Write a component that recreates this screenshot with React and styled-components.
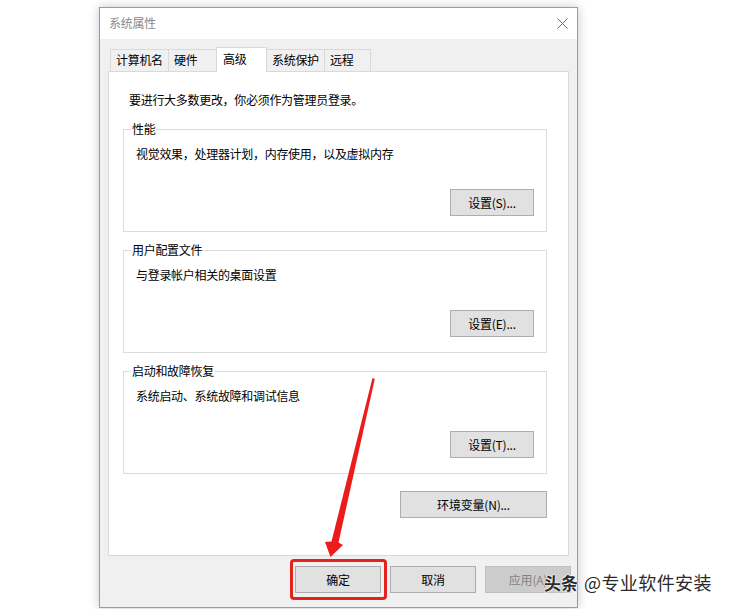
import React from 'react';
import styled, { createGlobalStyle } from 'styled-components';

const GlobalStyle = createGlobalStyle`
  body {
    margin: 0;
    background: #fff;
    font-family: "Noto Sans CJK SC", "Noto Sans", sans-serif;
  }
`;

const Page = styled.div`
  position: relative;
  width: 732px;
  height: 609px;
  overflow: hidden;
  box-sizing: border-box;
  padding: 7px 0 0 99px;
`;

const Window = styled.div`
  width: 479px;
  height: 601px;
  box-sizing: border-box;
  border: 1px solid #9c9c9c;
  background: #f0f0f0;
  box-shadow: 0 0 10px rgb(0 0 0 / 22%);
  display: flex;
  flex-direction: column;
`;

const TitleBar = styled.div`
  height: 31px;
  flex: none;
  background: #fff;
  display: flex;
  align-items: center;
  justify-content: space-between;
  padding: 0 9px;
`;

const Title = styled.div`
  font-size: 12px;
  color: #8a8a8a;
  letter-spacing: -0.3px;
  margin-top: -2px;
`;

const Body = styled.div`
  flex: 1;
  display: flex;
  flex-direction: column;
  padding: 8px 8px 0;
`;

const TabStrip = styled.div`
  display: flex;
  align-items: flex-end;
  height: 24px;
  padding-left: 2px;
  position: relative;
  z-index: 1;
`;

const Tab = styled.div`
  position: relative;
  width: ${(p) => p.$w}px;
  height: ${(p) => (p.$active ? 25 : 22)}px;
  margin-bottom: ${(p) => (p.$active ? -1 : 0)}px;
  margin-left: -1px;
  box-sizing: border-box;
  border: 1px solid #d9d9d9;
  border-bottom: none;
  background: ${(p) => (p.$active ? '#fff' : '#f0f0f0')};
  z-index: ${(p) => (p.$active ? 2 : 1)};
  padding: ${(p) => (p.$active ? '1px 0 0 6px' : '0 0 0 5px')};
  font-size: 12px;
  line-height: 20px;
  color: #000;
  letter-spacing: -0.3px;
  &:first-child {
    margin-left: 0;
  }
`;

const Panel = styled.div`
  height: 485px;
  flex: none;
  box-sizing: border-box;
  background: #fff;
  border: 1px solid #d9d9d9;
  padding: 20px 21px 0 14px;
  display: flex;
  flex-direction: column;
`;

const Intro = styled.div`
  margin-left: 6px;
  font-size: 12px;
  line-height: 16px;
  color: #000;
  letter-spacing: -0.3px;
`;

const Group = styled.fieldset`
  margin: 13px 0 0;
  padding: 0 12px 15px;
  border: 1px solid #dcdcdc;
  min-width: 0;
  & + & {
    margin-top: 10px;
  }
`;

const Legend = styled.legend`
  margin-left: -5px;
  padding: 0 1px;
  font-size: 12px;
  line-height: 16px;
  color: #000;
  letter-spacing: -0.3px;
`;

const Desc = styled.div`
  margin-top: 9px;
  font-size: 12px;
  line-height: 16px;
  color: #000;
  letter-spacing: -0.3px;
`;

const ButtonRow = styled.div`
  display: flex;
  justify-content: flex-end;
  gap: 9px;
  margin-top: ${(p) => p.$top}px;
  margin-right: ${(p) => p.$right || 0}px;
`;

const Button = styled.button`
  width: ${(p) => p.$w || 84}px;
  height: 27px;
  box-sizing: border-box;
  padding: 0;
  border: 1px solid #adadad;
  background: #e1e1e1;
  font-family: inherit;
  font-size: 12px;
  color: #000;
  letter-spacing: -0.2px;
  &:disabled {
    border-color: #bfbfbf;
    background: #cccccc;
    color: #838383;
  }
`;

const RedFrame = styled.div`
  position: absolute;
  left: 290px;
  top: 559px;
  width: 97px;
  height: 41px;
  box-sizing: border-box;
  border: 3px solid #e5231e;
  border-radius: 4px;
`;

const ArrowLayer = styled.svg`
  position: absolute;
  left: 0;
  top: 0;
  pointer-events: none;
`;

const Watermark = styled.div`
  position: absolute;
  left: 544px;
  top: 569px;
  line-height: 26px;
  color: #2b2b2b;
  white-space: nowrap;
  text-shadow: 0 0 2px #fff, 0 0 2px #fff, 0 0 1px #fff;
`;

const Brand = styled.span`
  font-size: 17px;
  font-weight: 700;
  margin-right: 6px;
`;

const Handle = styled.span`
  font-size: 18px;
  letter-spacing: 0.4px;
`;

const tabs = [
  { label: '计算机名', w: 59 },
  { label: '硬件', w: 49 },
  { label: '高级', w: 51, active: true },
  { label: '系统保护', w: 59 },
  { label: '远程', w: 47 },
];

const groups = [
  { title: '性能', desc: '视觉效果，处理器计划，内存使用，以及虚拟内存', btn: '设置(S)...' },
  { title: '用户配置文件', desc: '与登录帐户相关的桌面设置', btn: '设置(E)...' },
  { title: '启动和故障恢复', desc: '系统启动、系统故障和调试信息', btn: '设置(T)...' },
];

function CloseIcon() {
  return (
    <svg width="11" height="11" viewBox="0 0 11 11">
      <path d="M0.5 0.5 L10.5 10.5 M10.5 0.5 L0.5 10.5" stroke="#6f6f6f" strokeWidth="1" fill="none" />
    </svg>
  );
}

export default function App() {
  return (
    <Page>
      <GlobalStyle />
      <Window>
        <TitleBar>
          <Title>系统属性</Title>
          <CloseIcon />
        </TitleBar>
        <Body>
          <TabStrip>
            {tabs.map((t) => (
              <Tab key={t.label} $w={t.w} $active={t.active}>
                {t.label}
              </Tab>
            ))}
          </TabStrip>
          <Panel>
            <Intro>要进行大多数更改，你必须作为管理员登录。</Intro>
            {groups.map((g) => (
              <Group key={g.title}>
                <Legend>{g.title}</Legend>
                <Desc>{g.desc}</Desc>
                <ButtonRow $top={27}>
                  <Button>{g.btn}</Button>
                </ButtonRow>
              </Group>
            ))}
            <ButtonRow $top={17}>
              <Button $w={147}>环境变量(N)...</Button>
            </ButtonRow>
          </Panel>
          <ButtonRow $top={10} $right={-2}>
            <Button $w={86}>确定</Button>
            <Button $w={86}>取消</Button>
            <Button $w={86} disabled>
              应用(A)
            </Button>
          </ButtonRow>
        </Body>
      </Window>
      <RedFrame />
      <ArrowLayer width="732" height="609" viewBox="0 0 732 609">
        <polygon
          points="372.5,378 374.8,379 338.5,542.5 343,545 330.5,557 325,542 331.5,541.5"
          fill="#ec1c1c"
        />
      </ArrowLayer>
      <Watermark>
        <Brand>头条</Brand>
        <Handle>@专业软件安装</Handle>
      </Watermark>
    </Page>
  );
}
